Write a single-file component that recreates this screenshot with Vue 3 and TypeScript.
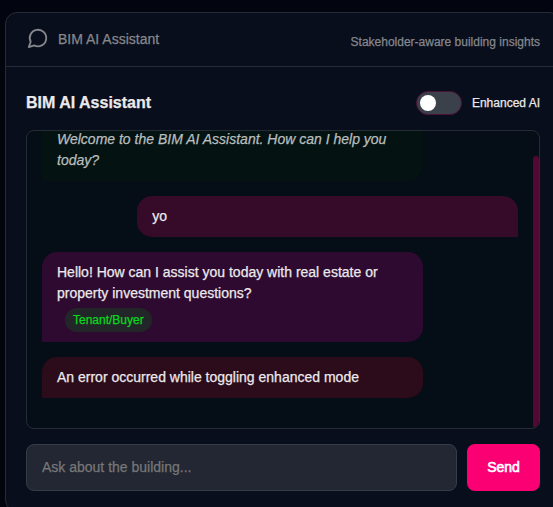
<script setup lang="ts">
import { ref } from 'vue'

interface Message {
  id: number
  kind: 'system' | 'user' | 'assistant' | 'error'
  text: string
  tag?: string
}

const enhanced = ref(false)
const draft = ref('')
const messages = ref<Message[]>([
  { id: 1, kind: 'system', text: 'Welcome to the BIM AI Assistant. How can I help you today?' },
  { id: 2, kind: 'user', text: 'yo' },
  {
    id: 3,
    kind: 'assistant',
    text: 'Hello! How can I assist you today with real estate or property investment questions?',
    tag: 'Tenant/Buyer',
  },
  { id: 4, kind: 'error', text: 'An error occurred while toggling enhanced mode' },
])

function send(): void {
  const text = draft.value.trim()
  if (!text) return
  messages.value.push({ id: Date.now(), kind: 'user', text })
  draft.value = ''
}
</script>

<template>
  <main class="page">
    <section class="card">
      <header class="card-header">
        <div class="brand">
          <svg class="brand-icon" viewBox="0 0 24 24" aria-hidden="true">
            <path d="M7.9 20A9 9 0 1 0 4 16.1L2 22Z" />
          </svg>
          <span class="brand-name">BIM AI Assistant</span>
        </div>
        <span class="tagline">Stakeholder-aware building insights</span>
      </header>

      <div class="card-body">
        <div class="chat-top">
          <h3 class="chat-title">BIM AI Assistant</h3>
          <label class="toggle">
            <input v-model="enhanced" type="checkbox" class="toggle-input" />
            <span class="track"><span class="knob"></span></span>
            <span class="toggle-label">Enhanced AI</span>
          </label>
        </div>

        <div class="messages">
          <div class="message-list">
            <div v-for="m in messages" :key="m.id" class="bubble" :class="m.kind">
              <span class="bubble-text">{{ m.text }}</span>
              <span v-if="m.tag" class="tag">{{ m.tag }}</span>
            </div>
          </div>
          <div class="thumb"></div>
        </div>

        <form class="composer" @submit.prevent="send">
          <input v-model="draft" class="field" type="text" placeholder="Ask about the building..." />
          <button class="send" type="submit">Send</button>
        </form>
      </div>
    </section>
  </main>
</template>

<style>
html,
body {
  margin: 0;
  overflow: hidden;
  background: #030610;
}
</style>

<style scoped>
.page {
  box-sizing: border-box;
  width: 553px;
  height: 507px;
  padding: 12px 0 0 5px;
  overflow: hidden;
  background: #030610;
  color: #ebe9ec;
  font-family: "Liberation Sans", Arial, sans-serif;
  -webkit-text-stroke: 0.25px currentColor;
}

.card {
  box-sizing: border-box;
  width: 556px;
  height: 500px;
  border: 1px solid #242a36;
  border-radius: 12px;
  background: #080e1b;
  box-shadow: 0 4px 20px rgba(0, 0, 0, 0.3);
}

.card-header {
  box-sizing: border-box;
  display: flex;
  align-items: center;
  justify-content: space-between;
  height: 54px;
  padding: 0 20px 0 21px;
  border-bottom: 1px solid #242a36;
  color: #85878d;
}

.brand {
  display: flex;
  align-items: center;
  gap: 9px;
}

.brand-icon {
  width: 22px;
  height: 22px;
  margin-bottom: 3px;
  fill: none;
  stroke: #85878d;
  stroke-width: 2;
  stroke-linecap: round;
  stroke-linejoin: round;
}

.brand-name {
  margin-bottom: 2px;
  font-size: 14px;
  line-height: 20px;
}

.tagline {
  margin-top: 4px;
  font-size: 12px;
  line-height: 18px;
}

.card-body {
  padding: 20px;
}

.chat-top {
  display: flex;
  align-items: center;
  justify-content: space-between;
  height: 32px;
  margin-bottom: 11px;
}

.chat-title {
  margin: 0;
  font-size: 16px;
  font-weight: 700;
  line-height: 24px;
}

.toggle {
  display: flex;
  align-items: center;
  gap: 10px;
}

.toggle-input {
  display: none;
}

.track {
  box-sizing: border-box;
  display: flex;
  align-items: center;
  width: 46px;
  height: 24px;
  padding: 0 3px;
  border: 1px solid #4c1238;
  border-radius: 12px;
  background: #3b414b;
}

.knob {
  width: 16px;
  height: 16px;
  border-radius: 50%;
  background: #fff;
}

.toggle-input:checked + .track {
  justify-content: flex-end;
}

.toggle-label {
  font-size: 12px;
}

.messages {
  position: relative;
  box-sizing: border-box;
  display: flex;
  flex-direction: column;
  justify-content: flex-end;
  height: 299px;
  margin-bottom: 15px;
  padding: 0 21px 30px 15px;
  overflow: hidden;
  border: 1px solid #242c35;
  border-radius: 8px;
  background: #050d16;
}

.message-list {
  display: flex;
  flex-direction: column;
  gap: 15px;
}

.bubble {
  box-sizing: border-box;
  width: 80%;
  padding: 10px 15px;
  border-radius: 15px 15px 15px 0;
  font-size: 14px;
  line-height: 21px;
}

.bubble-text {
  display: block;
}

.system {
  border-radius: 0 15px 15px 0;
  background: #041212;
  color: #b8bebd;
  font-style: italic;
}

.user {
  align-self: flex-end;
  border-radius: 15px 15px 0 15px;
  background: #360a29;
}

.assistant {
  background: #2e0a30;
}

.error {
  background: #2c0b1a;
}

.tag {
  display: block;
  width: max-content;
  margin: 4px 0 0 8px;
  padding: 3px 8px;
  border-radius: 12px;
  background: #232629;
  color: #08d91b;
  font-size: 12px;
  line-height: 18px;
}

.thumb {
  position: absolute;
  top: 25px;
  right: 0;
  bottom: 0;
  width: 6px;
  border-radius: 3px;
  background: #530833;
}

.composer {
  display: flex;
  gap: 10px;
}

.field {
  box-sizing: border-box;
  flex: 1;
  min-width: 0;
  height: 47px;
  padding: 0 15px 2px;
  border: 1px solid #373d48;
  border-radius: 8px;
  outline: none;
  background: #222733;
  color: #ebe9ec;
  font: 14px "Liberation Sans", Arial, sans-serif;
  -webkit-text-stroke: 0.25px currentColor;
}

.field::placeholder {
  color: #777777;
}

.send {
  width: 73px;
  height: 47px;
  padding: 0 0 2px;
  border: 0;
  border-radius: 8px;
  background: #fb0073;
  color: #fff;
  font: 400 14px "Liberation Sans", Arial, sans-serif;
  -webkit-text-stroke: 0.6px currentColor;
}
</style>
